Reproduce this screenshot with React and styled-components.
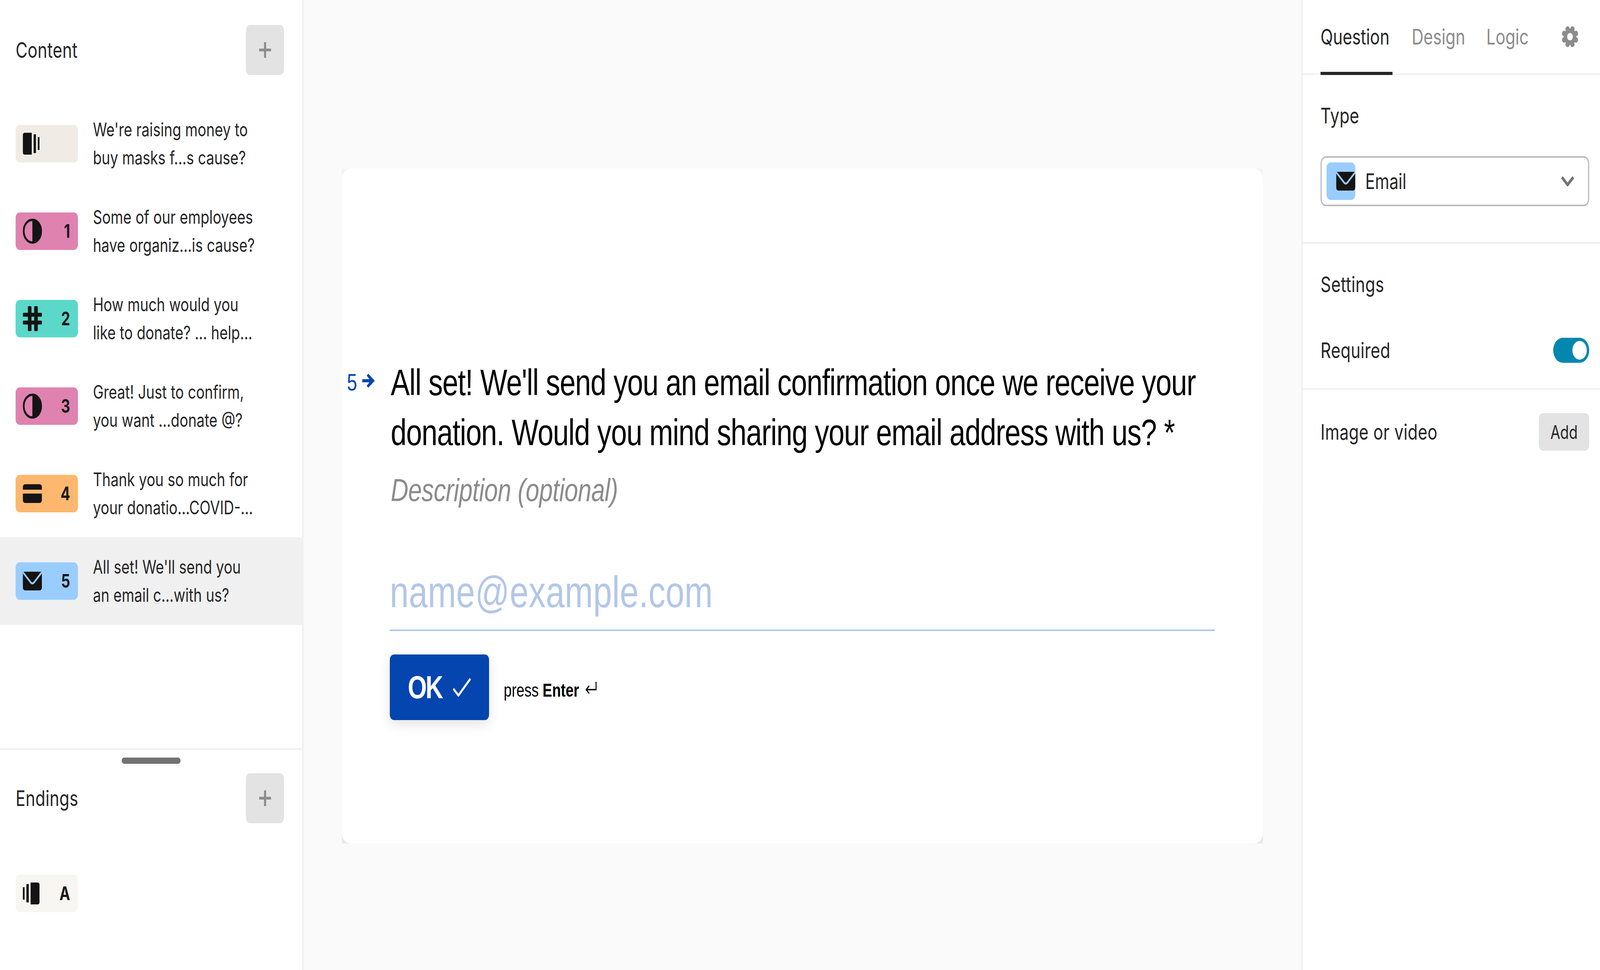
import React from 'react'
import styled, { createGlobalStyle } from 'styled-components'

const GlobalStyle = createGlobalStyle`
  html, body {
    margin: 0;
    padding: 0;
    overflow: hidden;
  }
  body {
    font-family: Inter, "Liberation Sans", sans-serif;
    color: #262627;
  }
  * {
    box-sizing: border-box;
  }
`

const Page = styled.div`
  display: flex;
  width: 5336px;
  height: 2484px;
  background: #fafafa;
  transform-origin: 0 0;
`

const Sidebar = styled.aside`
  display: flex;
  flex-direction: column;
  flex: 0 0 1012px;
  background: #fff;
  border-right: 4px solid #ededed;
`

const ContentPane = styled.div`
  flex: 1;
  padding-top: 64px;
`

const EndingsPane = styled.div`
  flex: 0 0 568px;
  border-top: 4px solid #f0f0f0;
  padding-top: 20px;
`

const Handle = styled.div`
  width: 196px;
  height: 16px;
  margin: 0 auto 24px;
  border-radius: 8px;
  background: #737373;
`

const PaneHeader = styled.div`
  display: flex;
  align-items: center;
  justify-content: space-between;
  padding: 0 61px 0 52px;
  font-size: 54.4px;
  line-height: 64px;
  letter-spacing: 0.5px;
`

const PlusButton = styled.div`
  display: flex;
  align-items: center;
  justify-content: center;
  width: 127px;
  height: 128px;
  border-radius: 14px;
  background: #e3e3e3;
`

const Rows = styled.div`
  margin-top: 64px;
`

const Row = styled.div`
  display: flex;
  align-items: center;
  gap: 50px;
  height: 224px;
  padding-left: 52px;
  background: ${(props) => (props.$active ? '#f0f0f0' : 'transparent')};
`

const Badge = styled.div`
  display: flex;
  align-items: center;
  justify-content: space-between;
  flex: 0 0 208px;
  width: 208px;
  height: 96px;
  padding: 0 26px 0 24px;
  border-radius: 14px;
  background: ${(props) => props.$bg};
`

const BadgeNumber = styled.span`
  font-size: 47.6px;
  font-weight: 700;
  line-height: 1;
  color: #191919;
`

const RowText = styled.div`
  font-size: 47.6px;
  line-height: 72px;
  white-space: nowrap;
`

const EndingRow = styled.div`
  margin-top: 132px;
  padding-left: 52px;
`

const Main = styled.main`
  flex: 1;
  padding-top: 432px;
`

const CardBack = styled.div`
  width: 3072px;
  height: 1728px;
  margin: 0 auto;
  background: linear-gradient(#f3f3f3, #e8e8e8);
`

const Card = styled.div`
  display: flex;
  height: 100%;
  padding: 483px 160px 0 17px;
  border-radius: 28px;
  background: #fff;
  font-family: "Liberation Sans", Arial, sans-serif;
  color: #000;
`

const QuestionNumber = styled.div`
  display: flex;
  align-items: center;
  align-self: flex-start;
  flex: 0 0 143px;
  gap: 17px;
  height: 128px;
  font-size: 61.2px;
  color: #0445af;
  svg {
    margin-top: -8px;
  }
`

const QuestionBody = styled.div`
  flex: 1;
`

const Title = styled.div`
  padding-left: 3px;
  font-size: 95.2px;
  line-height: 128px;
  letter-spacing: -1.5px;
  white-space: nowrap;
`

const Description = styled.div`
  margin-top: 28px;
  padding-left: 3px;
  font-size: 81.6px;
  font-style: italic;
  line-height: 112px;
  letter-spacing: -0.6px;
  color: #8c8c8c;
`

const EmailField = styled.div`
  margin-top: 130px;
  padding-bottom: 21px;
  border-bottom: 4px solid #b3c7e7;
  font-size: 113px;
  line-height: 150px;
  letter-spacing: 0.5px;
  color: #b3c7e7;
`

const ActionRow = styled.div`
  display: flex;
  align-items: center;
  gap: 49px;
  margin-top: 60px;
`

const OkButton = styled.div`
  display: flex;
  align-items: center;
  gap: 36px;
  width: 331px;
  height: 168px;
  padding: 0 60px;
  border-radius: 14px;
  background: #0445af;
  box-shadow: 0 12px 34px rgba(0, 0, 0, 0.1);
  color: #fff;
  font-size: 81.6px;
  font-weight: 700;
  letter-spacing: -4px;
`

const PressHint = styled.div`
  display: flex;
  align-items: center;
  gap: 22px;
  margin-top: 14px;
  font-size: 47.6px;
  svg {
    margin-top: -12px;
  }
`

const Panel = styled.aside`
  flex: 0 0 996px;
  background: #fff;
  border-left: 4px solid #ededed;
`

const Tabs = styled.div`
  display: flex;
  align-items: stretch;
  gap: 64px;
  height: 192px;
  padding: 0 72px 0 60px;
  border-bottom: 4px solid #f0f0f0;
`

const Tab = styled.div`
  display: flex;
  align-items: center;
  width: ${(props) => props.$width};
  height: 192px;
  padding-top: 4px;
  font-size: 54.4px;
  color: ${(props) => (props.$active ? '#262627' : '#8c8c8c')};
  border-bottom: 8px solid ${(props) => (props.$active ? '#262627' : 'transparent')};
`

const GearSlot = styled.div`
  display: flex;
  align-items: center;
  height: 188px;
  margin-left: auto;
`

const Section = styled.section`
  padding: ${(props) => props.$padding};
  border-bottom: 4px solid #f0f0f0;
`

const SectionLabel = styled.div`
  font-size: 54.4px;
  line-height: 64px;
  letter-spacing: 0.5px;
`

const Select = styled.div`
  display: flex;
  align-items: center;
  gap: 33px;
  height: 128px;
  margin-top: 72px;
  padding: 0 46px 0 16px;
  border: 4px solid #bbb;
  border-radius: 18px;
  font-size: 54.4px;
  svg:last-child {
    margin-left: auto;
  }
`

const SelectIcon = styled.div`
  display: flex;
  align-items: center;
  justify-content: center;
  width: 96px;
  height: 96px;
  border-radius: 14px;
  background: #9acdff;
`

const SettingRow = styled.div`
  display: flex;
  align-items: center;
  justify-content: space-between;
  margin-top: ${(props) => props.$top || 0}px;
  font-size: 54.4px;
  letter-spacing: 0.5px;
`

const Toggle = styled.div`
  display: flex;
  justify-content: flex-end;
  width: 120px;
  height: 64px;
  padding: 8px;
  border-radius: 32px;
  background: #0487af;
`

const Knob = styled.div`
  width: 48px;
  height: 48px;
  border-radius: 50%;
  background: #fff;
`

const PanelFooter = styled.div`
  padding: 60px 36px 0 60px;
`

const AddButton = styled.div`
  display: flex;
  align-items: center;
  justify-content: center;
  width: 168px;
  height: 96px;
  border-radius: 14px;
  background: #e3e3e3;
  font-size: 47.6px;
  letter-spacing: 0;
`

const PlusIcon = () => (
  <svg width="40" height="40" viewBox="0 0 40 40" fill="none" stroke="#8c8c8c" strokeWidth="7">
    <path d="M20 0v40M0 20h40" />
  </svg>
)

const WelcomeIcon = () => (
  <svg width="56" height="56" viewBox="0 0 56 56" fill="#141414">
    <path d="M6 0h24v56H6a6 6 0 0 1-6-6V6a6 6 0 0 1 6-6z" />
    <rect x="36" y="4" width="8" height="48" />
    <rect x="50" y="11" width="6" height="33" />
  </svg>
)

const EndingIcon = () => (
  <svg width="56" height="56" viewBox="0 0 56 56" fill="#141414">
    <path d="M26 0h24a6 6 0 0 1 6 6v44a6 6 0 0 1-6 6H26z" />
    <rect x="12" y="4" width="8" height="47" />
    <rect x="0" y="12" width="6" height="32" />
  </svg>
)

const ChoiceIcon = () => (
  <svg width="64" height="64" viewBox="0 0 64 64" fill="#141414">
    <circle cx="32" cy="32" r="29" fill="none" stroke="#141414" strokeWidth="6" />
    <path d="M32 0a32 32 0 0 1 0 64z" />
  </svg>
)

const HashIcon = () => (
  <svg width="64" height="64" viewBox="0 0 64 64" fill="#141414">
    <rect x="17" y="0" width="12" height="64" rx="3" />
    <rect x="38" y="0" width="12" height="64" rx="3" />
    <rect x="0" y="17" width="64" height="10" rx="3" />
    <rect x="0" y="37" width="64" height="10" rx="3" />
  </svg>
)

const PaymentIcon = () => (
  <svg width="64" height="48" viewBox="0 0 64 48" fill="#141414">
    <path d="M8 0h48a8 8 0 0 1 8 8v6H0V8a8 8 0 0 1 8-8z" />
    <path d="M0 24h64v16a8 8 0 0 1-8 8H8a8 8 0 0 1-8-8z" />
  </svg>
)

const EmailIcon = ({ bg }) => (
  <svg width="64" height="48" viewBox="0 0 64 48">
    <path d="M0 0h64v40a8 8 0 0 1-8 8H8a8 8 0 0 1-8-8z" fill="#141414" />
    <path d="M-2-1 27 28a7 7 0 0 0 10 0L66-1" fill="none" stroke={bg} strokeWidth="5" />
  </svg>
)

const GearIcon = () => (
  <svg width="56" height="56" viewBox="0 0 56 56">
    <g fill="#8c8c8c">
      <circle cx="28" cy="28" r="21" />
      {[22.5, 67.5, 112.5, 157.5, 202.5, 247.5, 292.5, 337.5].map((angle) => (
        <rect key={angle} x="21" y="0" width="14" height="20" rx="6" transform={`rotate(${angle} 28 28)`} />
      ))}
    </g>
    <circle cx="28" cy="28" r="9.5" fill="#fff" />
  </svg>
)

const ChevronIcon = () => (
  <svg width="44" height="26" viewBox="0 0 44 26" fill="none" stroke="#737373" strokeWidth="8">
    <path d="M3 3l19 19L41 3" />
  </svg>
)

const ArrowIcon = () => (
  <svg width="42" height="36" viewBox="0 0 42 36" fill="#0445af">
    <path d="M0 14h24L15 5l5-5 22 18-22 18-5-5 9-9H0z" />
  </svg>
)

const CheckIcon = () => (
  <svg width="61" height="48" viewBox="0 0 61 48" fill="none" stroke="#fff" strokeWidth="6">
    <path d="M2 28l17 17L59 2" />
  </svg>
)

const ReturnIcon = () => (
  <svg width="37" height="30" viewBox="0 0 37 30" fill="none" stroke="#000" strokeWidth="3.5">
    <path d="M35 0v20H3M12 10 2 20l10 10" />
  </svg>
)

const questions = [
  { bg: '#f0ece5', icon: <WelcomeIcon />, number: '', lines: ["We're raising money to", 'buy masks f...s cause?'] },
  { bg: '#e082b0', icon: <ChoiceIcon />, number: '1', lines: ['Some of our employees', 'have organiz...is cause?'] },
  { bg: '#5bd8c9', icon: <HashIcon />, number: '2', lines: ['How much would you', 'like to donate? ... help...'] },
  { bg: '#e082b0', icon: <ChoiceIcon />, number: '3', lines: ['Great! Just to confirm,', 'you want ...donate @?'] },
  { bg: '#feb76e', icon: <PaymentIcon />, number: '4', lines: ['Thank you so much for', 'your donatio...COVID-...'] },
  { bg: '#9acdff', icon: <EmailIcon bg="#9acdff" />, number: '5', lines: ["All set! We'll send you", 'an email c...with us?'], active: true },
]

// the layout is measured at 5336px, narrower windows squeeze it to fit
const fitWidth = Math.min(1, window.innerWidth / 5336)

export default function App() {
  return (
    <Page style={{ transform: `scaleX(${fitWidth})` }}>
      <GlobalStyle />
      <Sidebar>
        <ContentPane>
          <PaneHeader>
            Content
            <PlusButton><PlusIcon /></PlusButton>
          </PaneHeader>
          <Rows>
            {questions.map((q) => (
              <Row key={q.lines[0]} $active={q.active}>
                <Badge $bg={q.bg}>
                  {q.icon}
                  <BadgeNumber>{q.number}</BadgeNumber>
                </Badge>
                <RowText>
                  {q.lines[0]}
                  <br />
                  {q.lines[1]}
                </RowText>
              </Row>
            ))}
          </Rows>
        </ContentPane>
        <EndingsPane>
          <Handle />
          <PaneHeader>
            Endings
            <PlusButton><PlusIcon /></PlusButton>
          </PaneHeader>
          <EndingRow>
            <Badge $bg="#f7f6f2">
              <EndingIcon />
              <BadgeNumber>A</BadgeNumber>
            </Badge>
          </EndingRow>
        </EndingsPane>
      </Sidebar>

      <Main>
        <CardBack>
          <Card>
            <QuestionNumber>
              5
              <ArrowIcon />
            </QuestionNumber>
            <QuestionBody>
              <Title>
                All set! We'll send you an email confirmation once we receive your
                <br />
                donation. Would you mind sharing your email address with us? *
              </Title>
              <Description>Description (optional)</Description>
              <EmailField>name@example.com</EmailField>
              <ActionRow>
                <OkButton>
                  OK
                  <CheckIcon />
                </OkButton>
                <PressHint>
                  <span>press <b>Enter</b></span>
                  <ReturnIcon />
                </PressHint>
              </ActionRow>
            </QuestionBody>
          </Card>
        </CardBack>
      </Main>

      <Panel>
        <Tabs>
          <Tab $active $width="240px">Question</Tab>
          <Tab $width="185px">Design</Tab>
          <Tab>Logic</Tab>
          <GearSlot><GearIcon /></GearSlot>
        </Tabs>
        <Section $padding="72px 36px 92px 60px">
          <SectionLabel>Type</SectionLabel>
          <Select>
            <SelectIcon><EmailIcon bg="#9acdff" /></SelectIcon>
            Email
            <ChevronIcon />
          </Select>
        </Section>
        <Section $padding="72px 36px 64px 60px">
          <SectionLabel>Settings</SectionLabel>
          <SettingRow $top={104}>
            Required
            <Toggle><Knob /></Toggle>
          </SettingRow>
        </Section>
        <PanelFooter>
          <SettingRow>
            Image or video
            <AddButton>Add</AddButton>
          </SettingRow>
        </PanelFooter>
      </Panel>
    </Page>
  )
}
